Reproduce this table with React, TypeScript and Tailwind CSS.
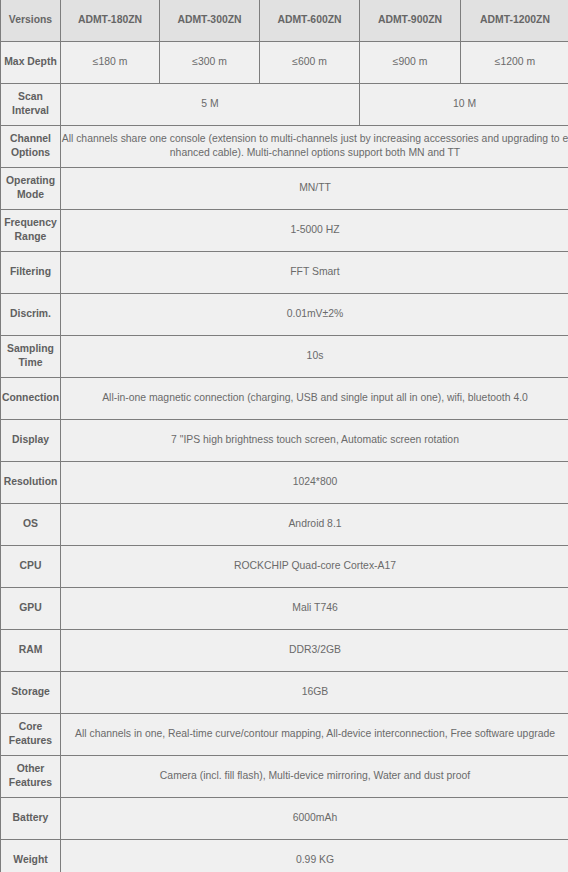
import React from "react";

type Row = { label: string; cells: { text: string; span: number }[]; breakAll?: boolean };

const full = (t: string) => [{ text: t, span: 5 }];

const rows: Row[] = [
  {
    label: "Max Depth",
    cells: [
      { text: "≤180 m", span: 1 },
      { text: "≤300 m", span: 1 },
      { text: "≤600 m", span: 1 },
      { text: "≤900 m", span: 1 },
      { text: "≤1200 m", span: 1 },
    ],
  },
  {
    label: "Scan Interval",
    cells: [
      { text: "5 M", span: 3 },
      { text: "10 M", span: 2 },
    ],
  },
  {
    label: "Channel Options",
    cells: full(
      "All channels share one console (extension to multi-channels just by increasing accessories and upgrading to enhanced cable). Multi-channel options support both MN and TT"
    ),
    breakAll: true,
  },
  { label: "Operating Mode", cells: full("MN/TT") },
  { label: "Frequency Range", cells: full("1-5000 HZ") },
  { label: "Filtering", cells: full("FFT Smart") },
  { label: "Discrim.", cells: full("0.01mV±2%") },
  { label: "Sampling Time", cells: full("10s") },
  {
    label: "Connection",
    cells: full(
      "All-in-one magnetic connection (charging, USB and single input all in one), wifi, bluetooth 4.0"
    ),
  },
  {
    label: "Display",
    cells: full('7 "IPS high brightness touch screen, Automatic screen rotation'),
  },
  { label: "Resolution", cells: full("1024*800") },
  { label: "OS", cells: full("Android 8.1") },
  { label: "CPU", cells: full("ROCKCHIP Quad-core Cortex-A17") },
  { label: "GPU", cells: full("Mali T746") },
  { label: "RAM", cells: full("DDR3/2GB") },
  { label: "Storage", cells: full("16GB") },
  {
    label: "Core Features",
    cells: full(
      "All channels in one, Real-time curve/contour mapping, All-device interconnection, Free software upgrade"
    ),
  },
  {
    label: "Other Features",
    cells: full("Camera (incl. fill flash), Multi-device mirroring, Water and dust proof"),
  },
  { label: "Battery", cells: full("6000mAh") },
  { label: "Weight", cells: full("0.99 KG") },
];

const headers = ["ADMT-180ZN", "ADMT-300ZN", "ADMT-600ZN", "ADMT-900ZN", "ADMT-1200ZN"];

export default function App() {
  return (
    <div
      className="w-[568px] h-[872px] overflow-hidden bg-[#f0f0f0]"
      style={{ fontFamily: '"Liberation Sans", Arial, sans-serif' }}
    >
      <table className="w-[569px] table-fixed border-collapse text-[10.4px] leading-[14px] text-[#6a6a6a]">
        <colgroup>
          <col className="w-[60px]" />
          <col className="w-[99px]" />
          <col className="w-[100px]" />
          <col className="w-[100px]" />
          <col className="w-[101px]" />
          <col className="w-[109px]" />
        </colgroup>
        <thead>
          <tr className="h-[41px] bg-[#e1e1e1]">
            <th className="border border-t-0 border-[#7d7d7d] p-0 text-center font-bold text-[#666]">Versions</th>
            {headers.map((h) => (
              <th key={h} className="border border-t-0 border-[#7d7d7d] p-0 text-center font-bold text-[#666]">
                {h}
              </th>
            ))}
          </tr>
        </thead>
        <tbody>
          {rows.map((r) => (
            <tr key={r.label} className="h-[42px] bg-[#f0f0f0]">
              <td className="border border-[#7d7d7d] p-0 text-center font-bold text-[#606060] break-words">
                {r.label}
              </td>
              {r.cells.map((c, i) => (
                <td
                  key={i}
                  colSpan={c.span}
                  className={
                    "border border-[#7d7d7d] p-0 text-center " + (r.breakAll ? "break-all" : "")
                  }
                >
                  {c.text}
                </td>
              ))}
            </tr>
          ))}
        </tbody>
      </table>
    </div>
  );
}
